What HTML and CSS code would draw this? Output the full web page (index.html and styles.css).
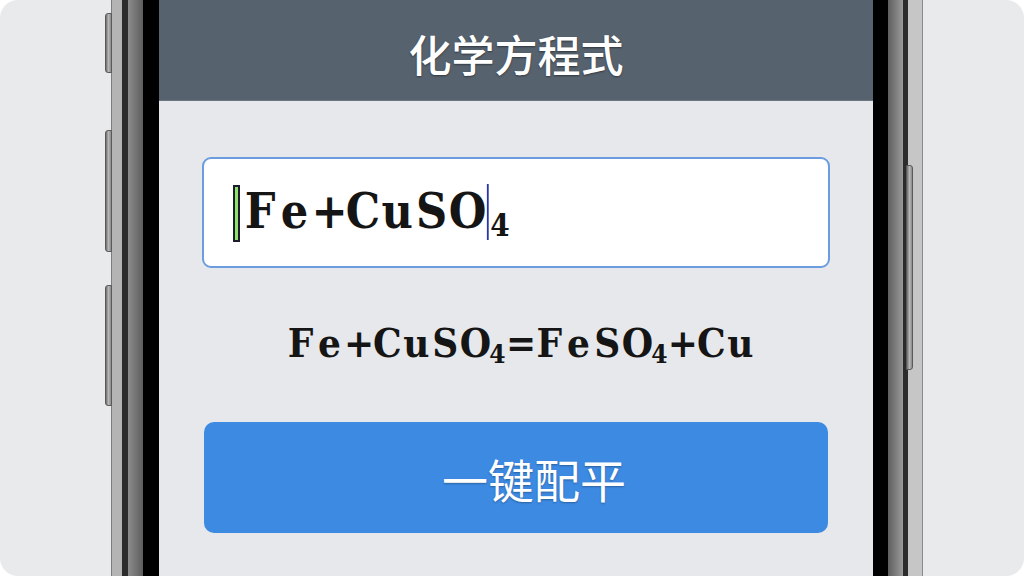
FILE: index.html
```html
<!DOCTYPE html>
<html>
	<head>
		<meta charset="utf-8">
		<title>化学方程式</title>
		<link rel="stylesheet" href="styles.css">
	</head>
	<body>
		<div class="card">
			<div class="phone">
				<span class="btn-side btn-l1"></span>
				<span class="btn-side btn-l2"></span>
				<span class="btn-side btn-l3"></span>
				<span class="btn-side btn-r1"></span>
				<div class="edge-dark">
					<div class="band">
						<div class="bezel">
							<div class="screen">
								<div class="header">化学方程式</div>
								<div class="content">
									<div class="input_box">
										<span class="caret"></span>
										<span class="formula big"><span>F</span><span>e</span><span>+</span><span>C</span><span>u</span><span>S</span><span>O</span><b class="caret_thin"></b><sub>4</sub></span>
									</div>
									<div class="result">
										<span class="formula"><span>F</span><span>e</span><span>+</span><span>C</span><span>u</span><span>S</span><span>O</span><sub>4</sub><span>=</span><span>F</span><span>e</span><span>S</span><span>O</span><sub>4</sub><span>+</span><span>C</span><span>u</span></span>
									</div>
									<div class="balance_btn">一键配平</div>
								</div>
							</div>
						</div>
					</div>
				</div>
			</div>
		</div>
	</body>
</html>
```
FILE: styles.css
```css
*{
	margin: 0;
	padding: 0;
	box-sizing: border-box;
}
body{
	background: #ffffff;
	width: 1024px;
	height: 576px;
	overflow: hidden;
}
.card{
	width: 1024px;
	height: 576px;
	border-radius: 18px;
	background: #e9eaec;
	overflow: hidden;
	display: flex;
}
/* phone frame, only the sides are visible */
.phone{
	margin-left: 112px;
	width: 810px;
	height: 100%;
	position: relative;
	border-left: 10px solid #b4b4b4;
	border-right: 14px solid #c6c6c6;
	box-shadow: inset 2px 0 0 #d2d2d2, inset -3px 0 0 #e0e0e0, -1px 0 0 #7c7c7c, 1px 0 0 #8a8a8a;
}
.edge-dark{
	height: 100%;
	padding: 0 5px 0 6px;
	background: #2c2c2c;
}
.band{
	height: 100%;
	padding: 0 15px;
	background: linear-gradient(90deg, #8c8c8c 0, #5e5e5e 15px, #5e5e5e calc(100% - 15px), #9a9a9a 100%);
}
.bezel{
	height: 100%;
	padding: 0 15px 0 16px;
	background: #000000;
}
.screen{
	height: 100%;
	background: #e6e8eb;
	display: flex;
	flex-direction: column;
}
.btn-side{
	position: absolute;
	width: 7px;
	background: linear-gradient(90deg, #6e6e6e, #b8b8b8 50%, #8a8a8a);
	border: 1px solid #5a5a5a;
}
.btn-l1, .btn-l2, .btn-l3{
	right: 100%;
	margin-right: 10px;
	border-radius: 3px 0 0 3px;
}
.btn-l1{ top: 13px; height: 60px; }
.btn-l2{ top: 130px; height: 122px; }
.btn-l3{ top: 285px; height: 121px; }
.btn-r1{
	left: 100%;
	margin-left: -2px;
	top: 165px;
	height: 205px;
	border-radius: 0 3px 3px 0;
}
.header{
	height: 101px;
	flex-shrink: 0;
	background: #57626f;
	border-bottom: 1px solid #6b7581;
	color: #ffffff;
	font-family: "Noto Sans CJK SC", sans-serif;
	font-size: 43px;
	font-weight: 500;
	display: flex;
	align-items: center;
	justify-content: center;
	padding-top: 6px;
	text-shadow: 0 1px 2px rgba(0,0,0,0.45);
}
.content{
	padding: 56px 43px 0;
	display: flex;
	flex-direction: column;
}
.input_box{
	height: 111px;
	background: #ffffff;
	border: 2px solid #6b9ce0;
	border-radius: 9px;
	display: flex;
	align-items: center;
	padding-left: 29px;
}
.caret{
	width: 7px;
	height: 57px;
	background: #8fe26c;
	border: 2px solid #1c1c2c;
	margin-right: 3px;
	margin-top: 2px;
	flex-shrink: 0;
}
.caret_thin{
	display: inline-block;
	width: 2px;
	height: 56px;
	background: #2a36a8;
	vertical-align: -12px;
	margin: 0 2px 0 4px;
}
/* slab glyphs set in fixed cells, squeezed like a bitmap font */
.formula{
	display: inline-block;
	font-family: "DejaVu Serif", "Liberation Serif", serif;
	font-weight: bold;
	font-size: 40px;
	line-height: 1;
	color: #151515;
	white-space: nowrap;
	transform: scaleX(0.9);
}
.formula span{
	display: inline-block;
	width: 32.2px;
	text-align: center;
}
.formula sub{
	display: inline-block;
	width: 19px;
	text-align: center;
	font-size: 26px;
	vertical-align: -6px;
}
.formula.big{
	font-size: 48px;
	transform-origin: left center;
}
.formula.big span{
	width: 38.1px;
}
.formula.big sub{
	width: 21px;
	font-size: 31px;
	vertical-align: -8px;
}
.result{
	height: 154px;
	display: flex;
	align-items: center;
	justify-content: center;
	padding-left: 8px;
}
.balance_btn{
	height: 111px;
	margin: 0 2px;
	background: #3d8ae3;
	border-radius: 10px;
	color: #ffffff;
	font-family: "Noto Sans CJK SC", sans-serif;
	font-size: 46px;
	display: flex;
	align-items: center;
	justify-content: center;
	padding-left: 36px;
	text-shadow: 0 1px 2px rgba(0,0,0,0.3);
}
```
